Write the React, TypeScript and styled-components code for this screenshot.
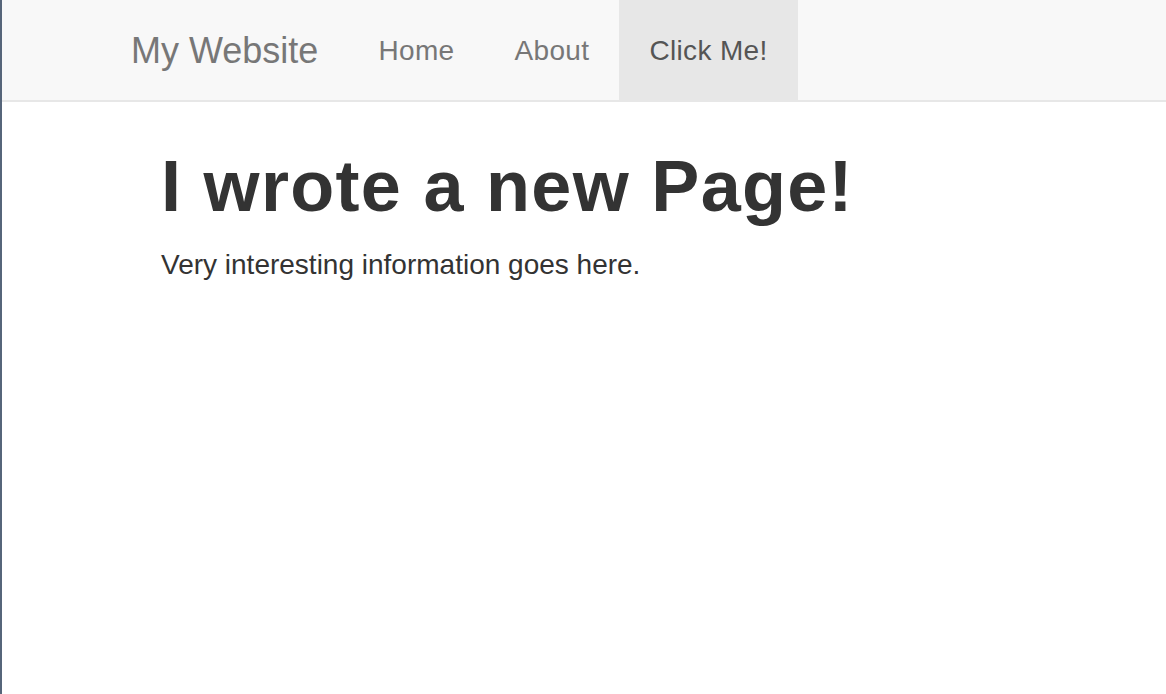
import React from "react";
import styled, { createGlobalStyle } from "styled-components";

const GlobalStyle = createGlobalStyle`
  html, body {
    margin: 0;
    padding: 0;
    background: #ffffff;
  }
  body {
    font-family: "Liberation Sans", Arial, Helvetica, sans-serif;
    color: #333333;
  }
  * { box-sizing: border-box; }
`;

const Page = styled.div`
  min-height: 100vh;
  border-left: 2px solid #56657a;
  background: #ffffff;
`;

const Navbar = styled.nav`
  background: #f8f8f8;
  border-bottom: 2px solid #e7e7e7;
`;

const NavInner = styled.div`
  display: flex;
  align-items: stretch;
  height: 100px;
  padding-left: 99px;
`;

const Brand = styled.a`
  display: block;
  padding: 30px;
  font-size: 36px;
  line-height: 41px;
  color: #777777;
  text-decoration: none;
  white-space: nowrap;
`;

const NavList = styled.ul`
  display: flex;
  margin: 0;
  padding: 0;
  list-style: none;
`;

const NavLink = styled.a<{ $active?: boolean }>`
  display: block;
  padding: 30px;
  font-size: 28px;
  line-height: 41px;
  letter-spacing: 0.35px;
  white-space: nowrap;
  text-decoration: none;
  color: ${(p) => (p.$active ? "#555555" : "#777777")};
  background: ${(p) => (p.$active ? "#e7e7e7" : "transparent")};
`;

const Main = styled.main`
  padding: 45px 0 0 159px;
`;

const Title = styled.h1`
  margin: 0 0 19px;
  font-size: 72px;
  line-height: 79px;
  font-weight: 700;
  letter-spacing: 1.3px;
  color: #333333;
  white-space: nowrap;
`;

const Text = styled.p`
  margin: 0;
  font-size: 28px;
  line-height: 40px;
  color: #333333;
`;

const links = [
  { label: "Home" },
  { label: "About" },
  { label: "Click Me!", active: true },
];

export default function App() {
  return (
    <>
      <GlobalStyle />
      <Page>
        <Navbar>
          <NavInner>
            <Brand href="#">My Website</Brand>
            <NavList>
              {links.map((l) => (
                <li key={l.label}>
                  <NavLink href="#" $active={l.active}>
                    {l.label}
                  </NavLink>
                </li>
              ))}
            </NavList>
          </NavInner>
        </Navbar>
        <Main>
          <Title>I wrote a new Page!</Title>
          <Text>Very interesting information goes here.</Text>
        </Main>
      </Page>
    </>
  );
}
